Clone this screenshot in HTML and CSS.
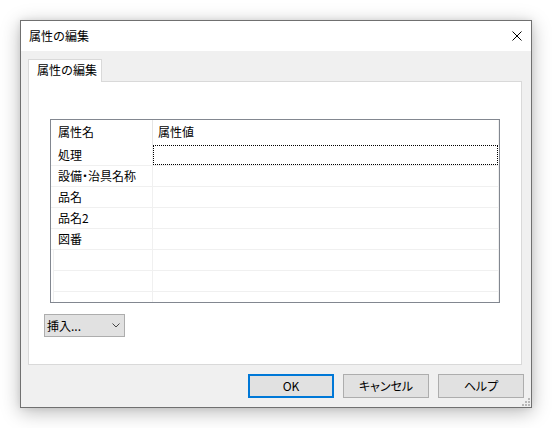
FILE: index.html
```html
<!DOCTYPE html>
<html lang="ja">
<head>
<meta charset="utf-8">
<title>属性の編集</title>
<link rel="stylesheet" href="styles.css">
</head>
<body>
<div class="stage">
  <div class="window">
    <div class="titlebar">
      <span class="title">属性の編集</span>
      <svg class="close" width="10" height="10" viewBox="0 0 10 10"><path d="M0.5 0.5L9.5 9.5M9.5 0.5L0.5 9.5" stroke="#000" stroke-width="1" fill="none"/></svg>
    </div>
    <div class="body">
      <div class="tabs"><div class="tab">属性の編集</div></div>
      <div class="panel">
        <div class="list">
          <div class="head">
            <div class="name">属性名</div>
            <div class="value">属性値</div>
          </div>
          <div class="row"><div class="name">処理</div><div class="value focus"></div></div>
          <div class="row"><div class="name narrow">設備・治具名称</div><div class="value"></div></div>
          <div class="row"><div class="name">品名</div><div class="value"></div></div>
          <div class="row"><div class="name">品名2</div><div class="value"></div></div>
          <div class="row"><div class="name">図番</div><div class="value"></div></div>
          <div class="row empty"><div class="name"></div><div class="value"></div></div>
          <div class="row empty"><div class="name"></div><div class="value"></div></div>
          <div class="row empty"><div class="name"></div><div class="value"></div></div>
        </div>
        <div class="dropdown">
          <span>挿入...</span>
          <svg width="8" height="5" viewBox="0 0 8 5"><path d="M0.5 0.5L4 4L7.5 0.5" stroke="#444" stroke-width="1" fill="none"/></svg>
        </div>
      </div>
      <div class="buttons">
        <div class="btn default">OK</div>
        <div class="btn">キャンセル</div>
        <div class="btn">ヘルプ</div>
      </div>
    </div>
    <svg class="grip" width="8" height="8" viewBox="0 0 8 8" fill="#b8b8b8">
      <rect x="6" y="0" width="2" height="2"/>
      <rect x="3" y="3" width="2" height="2"/>
      <rect x="6" y="3" width="2" height="2"/>
      <rect x="0" y="6" width="2" height="2"/>
      <rect x="3" y="6" width="2" height="2"/>
      <rect x="6" y="6" width="2" height="2"/>
    </svg>
  </div>
</div>
</body>
</html>
```
FILE: styles.css
```css
* { box-sizing: border-box; }
html, body {
  margin: 0;
  padding: 0;
  background: #fff;
}
body {
  font-family: "Noto Sans CJK JP", "Noto Sans", sans-serif;
  font-size: 12px;
  color: #000;
  width: 552px;
  height: 428px;
  overflow: hidden;
}
.stage {
  padding: 20px 0 0 20px;
}
.window {
  position: relative;
  width: 512px;
  height: 388px;
  border: 1px solid #707070;
  background: #f0f0f0;
  display: flex;
  flex-direction: column;
  box-shadow: 0 4px 18px rgba(0, 0, 0, 0.28), 0 0 6px rgba(0, 0, 0, 0.08);
}
.titlebar {
  height: 30px;
  background: #fff;
  display: flex;
  align-items: center;
  justify-content: space-between;
  padding: 0 9px 0 8px;
}
.title {
  line-height: 16px;
}
.close { display: block; }
.body {
  flex: 1;
  padding: 8px 7px 0 7px;
  display: flex;
  flex-direction: column;
}
.tabs {
  display: flex;
  height: 22px;
}
.tab {
  position: relative;
  z-index: 1;
  width: 74px;
  height: 23px;
  background: #fff;
  border: 1px solid #d9d9d9;
  border-bottom: none;
  padding-left: 8px;
  line-height: 20px;
  white-space: nowrap;
}
.panel {
  width: 494px;
  height: 284px;
  background: #fff;
  border: 1px solid #d9d9d9;
  padding: 37px 0 0 15px;
}
.list {
  width: 450px;
  height: 184px;
  margin-left: 6px;
  border: 1px solid #828790;
  overflow: hidden;
}
.head {
  display: flex;
  height: 25px;
  align-items: stretch;
}
.head .name {
  width: 102px;
  border-right: 1px solid #e5e5e5;
  padding-left: 7px;
  line-height: 24px;
}
.head .value {
  width: 346px;
  border-right: 1px solid #f0f0f0;
  padding-left: 5px;
  line-height: 24px;
}
.row {
  display: flex;
  height: 21px;
  border-bottom: 1px solid #f0f0f0;
}
.row .name {
  width: 102px;
  border-right: 1px solid #f0f0f0;
  padding-left: 7px;
  line-height: 20px;
  white-space: nowrap;
}
.row .narrow {
  font-feature-settings: "palt";
}
.row .value {
  width: 346px;
  border-right: 1px solid #f0f0f0;
}
.row .value.focus {
  border: 1px dotted #000;
  width: 345px;
}
.row.empty {
  margin-left: 2px;
}
.row.empty .name {
  width: 100px;
  border-left: 1px solid #f0f0f0;
}
.dropdown {
  margin-top: 11px;
  width: 81px;
  height: 23px;
  background: #e1e1e1;
  border: 1px solid #adadad;
  display: flex;
  align-items: center;
  justify-content: space-between;
  padding: 0 4px 0 2px;
  line-height: 20px;
}
.dropdown svg { display: block; }
.buttons {
  margin-top: 9px;
  display: flex;
  justify-content: flex-end;
  gap: 9px;
}
.btn {
  width: 86px;
  height: 24px;
  background: #e1e1e1;
  border: 1px solid #adadad;
  display: flex;
  align-items: center;
  justify-content: center;
  line-height: 20px;
  font-feature-settings: "palt";
}
.btn.default {
  border: 2px solid #0078d7;
}
.grip {
  position: absolute;
  right: 1px;
  bottom: 1px;
  display: block;
}
```
